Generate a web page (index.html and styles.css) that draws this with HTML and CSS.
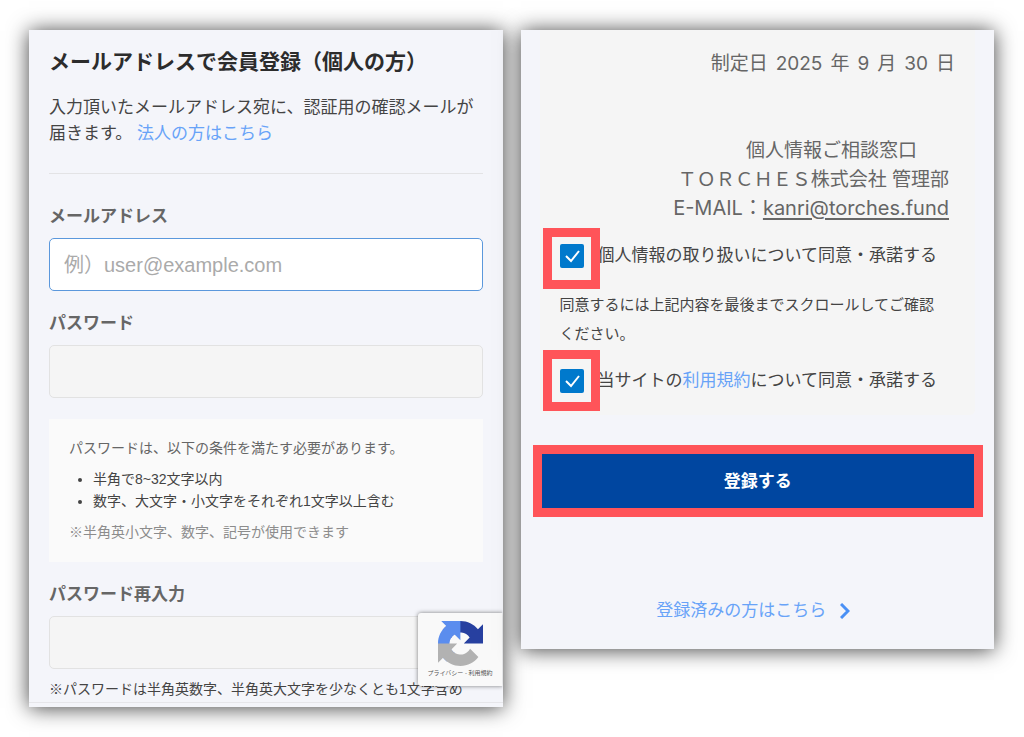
FILE: index.html
```html
<!DOCTYPE html>
<html lang="ja">
<head>
<meta charset="utf-8">
<meta name="viewport" content="width=device-width, initial-scale=1">
<title>会員登録</title>
<link rel="stylesheet" href="styles.css">
</head>
<body>
<main class="screens">
  <section class="card signup">
    <h1 class="title">メールアドレスで会員登録（個人の方）</h1>
    <p class="lead">入力頂いたメールアドレス宛に、認証用の確認メールが届きます。 <a class="link" href="#">法人の方はこちら</a></p>
    <form class="form">
      <div class="field">
        <label class="label" for="email">メールアドレス</label>
        <input class="input input-active" id="email" type="email" placeholder="例）user@example.com">
      </div>
      <div class="field">
        <label class="label" for="password">パスワード</label>
        <input class="input" id="password" type="password">
      </div>
      <div class="rules">
        <p class="rules-lead">パスワードは、以下の条件を満たす必要があります。</p>
        <ul class="rules-list">
          <li>半角で8~32文字以内</li>
          <li>数字、大文字・小文字をそれぞれ1文字以上含む</li>
        </ul>
        <p class="rules-note">※半角英小文字、数字、記号が使用できます</p>
      </div>
      <div class="field">
        <label class="label" for="confirm">パスワード再入力</label>
        <input class="input" id="confirm" type="password">
      </div>
      <p class="hint">※パスワードは半角英数字、半角英大文字を少なくとも1文字含め</p>
    </form>
    <div class="card-foot"></div>
    <aside class="badge">
      <svg class="badge-logo" viewBox="0 0 64 64" aria-hidden="true">
        <path fill="#2740a0" d="M64 31.955l-.033-1.37V4.687l-7.16 7.16C50.948 4.674 42.033.093 32.05.093c-10.4 0-19.622 4.96-25.458 12.64l11.736 11.86a15.55 15.55 0 0 1 4.754-5.334c2.05-1.6 4.952-2.906 8.968-2.906.485 0 .86.057 1.135.163 4.976.393 9.288 3.14 11.828 7.124l-8.307 8.307L64 31.953"/>
        <path fill="#5b8dee" d="M31.862.094l-1.37.033H4.594l7.16 7.16C4.58 13.147 0 22.06 0 32.046c0 10.4 4.96 19.622 12.64 25.458L24.5 45.768a15.55 15.55 0 0 1-5.334-4.754c-1.6-2.05-2.906-4.952-2.906-8.968 0-.485.057-.86.163-1.135.393-4.976 3.14-9.288 7.124-11.828l8.307 8.307L31.86.095"/>
        <path fill="#b2b2b2" d="M.001 32.045l.033 1.37v25.898l7.16-7.16c5.86 7.173 14.774 11.754 24.76 11.754 10.4 0 19.622-4.96 25.458-12.64l-11.736-11.86a15.55 15.55 0 0 1-4.754 5.334c-2.05 1.6-4.952 2.906-8.968 2.906-.485 0-.86-.057-1.135-.163-4.976-.393-9.288-3.14-11.828-7.124l8.307-8.307L0 32.045"/>
      </svg>
      <p class="badge-text"><a href="#">プライバシー</a> - <a href="#">利用規約</a></p>
    </aside>
  </section>

  <section class="card consent">
    <div class="panel">
      <p class="date"><span>制定日</span> <span>2025</span> <span>年</span> <span>9</span> <span>月</span> <span>30</span> <span>日</span></p>
      <address class="contact">
        <span class="contact-desk">個人情報ご相談窓口</span>
        <span>ＴＯＲＣＨＥＳ株式会社 管理部</span>
        <span class="contact-mail">E-MAIL：<a class="mail" href="mailto:kanri@torches.fund">kanri@torches.fund</a></span>
      </address>
      <div class="agree">
        <span class="tick">
          <input class="checkbox" id="privacy" type="checkbox" checked>
          <svg class="tick-mark" viewBox="0 0 24 24" aria-hidden="true"><path d="M6 12l5 5 8-10"/></svg>
          <span class="marker"></span>
        </span>
        <label for="privacy">個人情報の取り扱いについて同意・承諾する</label>
      </div>
      <p class="agree-note">同意するには上記内容を最後までスクロールしてご確認<br>ください。</p>
      <div class="agree">
        <span class="tick">
          <input class="checkbox" id="terms" type="checkbox" checked>
          <svg class="tick-mark" viewBox="0 0 24 24" aria-hidden="true"><path d="M6 12l5 5 8-10"/></svg>
          <span class="marker marker-high"></span>
        </span>
        <label for="terms">当サイトの<a class="link" href="#">利用規約</a>について同意・承諾する</label>
      </div>
    </div>
    <button class="submit" type="submit">登録する</button>
    <a class="login" href="#">登録済みの方はこちら
      <svg class="chevron" viewBox="0 0 10 16" aria-hidden="true"><path d="M1 1l7 7-7 7"/></svg>
    </a>
  </section>
</main>
</body>
</html>
```

FILE: styles.css
```css
* {
  box-sizing: border-box;
}

body {
  margin: 0;
  background: #fff;
  color: #444;
  font-family: "Liberation Sans", "Noto Sans CJK JP", sans-serif;
  font-size: 17px;
}

h1, p, ul {
  margin: 0;
}

.screens {
  display: grid;
  grid-template-columns: 1fr 1fr;
  gap: 18px;
  align-items: start;
  padding: 30px 30px 30px 29px;
}

.card {
  position: relative;
  background: #f4f5fa;
  box-shadow: 0 1px 20px rgba(0, 0, 0, 0.75);
}

.signup {
  padding: 18px 20px 0;
}

.title {
  color: #2c2c2c;
  font-size: 21px;
  font-weight: 700;
  line-height: 28px;
}

.lead {
  margin-top: 19px;
  padding-bottom: 26px;
  border-bottom: 1px solid #e3e3e5;
  line-height: 26px;
}

.link {
  color: #68a3f8;
  text-decoration: none;
}

.form {
  display: flex;
  flex-direction: column;
  gap: 21px;
  padding-top: 31px;
}

.field {
  display: flex;
  flex-direction: column;
  gap: 9px;
}

.label {
  color: #666;
  font-weight: 700;
  line-height: 24px;
}

.input {
  width: 100%;
  height: 53px;
  padding: 2px 14px 0;
  border: 1px solid #e2e2e2;
  border-radius: 5px;
  background: #f5f5f5;
  color: #444;
  font: inherit;
  font-size: 20px;
}

.input-active {
  border-color: #5b98dc;
  background: #fff;
}

.input::placeholder {
  color: #aaa;
  opacity: 1;
}

.rules {
  display: flex;
  flex-direction: column;
  gap: 9px;
  padding: 18px 20px 19px;
  background: #fafafa;
  font-size: 14px;
  line-height: 22px;
}

.rules-lead {
  color: #666;
}

.rules-list {
  padding-left: 24px;
}

.rules-note {
  color: #8c8c8c;
}

.hint {
  margin-top: -12px;
  font-size: 14px;
  line-height: 22px;
  white-space: nowrap;
}

.card-foot {
  height: 5px;
  margin: 2px -20px 0;
  border-top: 1px solid #e6e6ea;
}

.badge {
  position: absolute;
  right: 0;
  bottom: 21px;
  display: flex;
  flex-direction: column;
  align-items: center;
  width: 85px;
  height: 73px;
  padding-top: 8px;
  border-radius: 3px 0 0 3px;
  background: #f9f9f9;
  box-shadow: 0 0 4px rgba(0, 0, 0, 0.5);
  clip-path: inset(-8px 0 -8px -8px);
}

.badge-logo {
  width: 45px;
  height: 45px;
}

.badge-text {
  color: #555;
  font-size: 6px;
  line-height: 14px;
  white-space: nowrap;
}

.badge-text a {
  color: inherit;
  text-decoration: none;
}

.consent {
  display: flex;
  flex-direction: column;
  padding: 0 19px 26px;
}

.panel {
  padding: 19px 20px 22px;
  border-radius: 0 0 5px 5px;
  background: #f5f5f5;
}

.date,
.contact {
  color: #666;
  font-family: Inter, "Noto Sans CJK JP", sans-serif;
  font-size: 19px;
  font-style: normal;
  line-height: 29px;
}

.date {
  display: flex;
  justify-content: flex-end;
  gap: 8px;
}

.contact {
  display: flex;
  flex-direction: column;
  align-items: flex-end;
  margin-top: 58px;
  padding-right: 6px;
}

.contact-desk {
  padding-right: 32px;
}

.contact-mail {
  font-size: 20px;
}

.mail {
  color: inherit;
  text-underline-offset: 3px;
}

.agree {
  display: flex;
  gap: 14px;
  margin-top: 21px;
  line-height: 24px;
  white-space: nowrap;
}

.tick {
  position: relative;
  width: 24px;
  height: 24px;
}

.checkbox {
  display: block;
  width: 24px;
  height: 24px;
  margin: 0;
  border-radius: 2px;
  background: #0079cc;
  appearance: none;
}

.tick-mark {
  position: absolute;
  inset: 0;
  fill: none;
  stroke: #fff;
  stroke-width: 2;
  pointer-events: none;
}

.marker {
  position: absolute;
  top: -16px;
  left: -17px;
  width: 57px;
  height: 61px;
  border: 9px solid #ff5459;
  pointer-events: none;
}

.marker-high {
  top: -19px;
}

.agree-note {
  margin-top: 22px;
  font-size: 15px;
  line-height: 29px;
}

.submit {
  height: 54px;
  margin: 39px 1px 0 2px;
  padding: 0 0 4px;
  border: 0;
  outline: 9px solid #ff5459;
  background: #0046a0;
  color: #fff;
  font: inherit;
  font-weight: 700;
}

.login {
  display: flex;
  align-items: center;
  justify-content: center;
  gap: 14px;
  margin-top: 91px;
  padding-right: 8px;
  color: #68a3f8;
  line-height: 24px;
  text-decoration: none;
}

.chevron {
  width: 10px;
  height: 16px;
  fill: none;
  stroke: #4a90f5;
  stroke-width: 3;
}
```
